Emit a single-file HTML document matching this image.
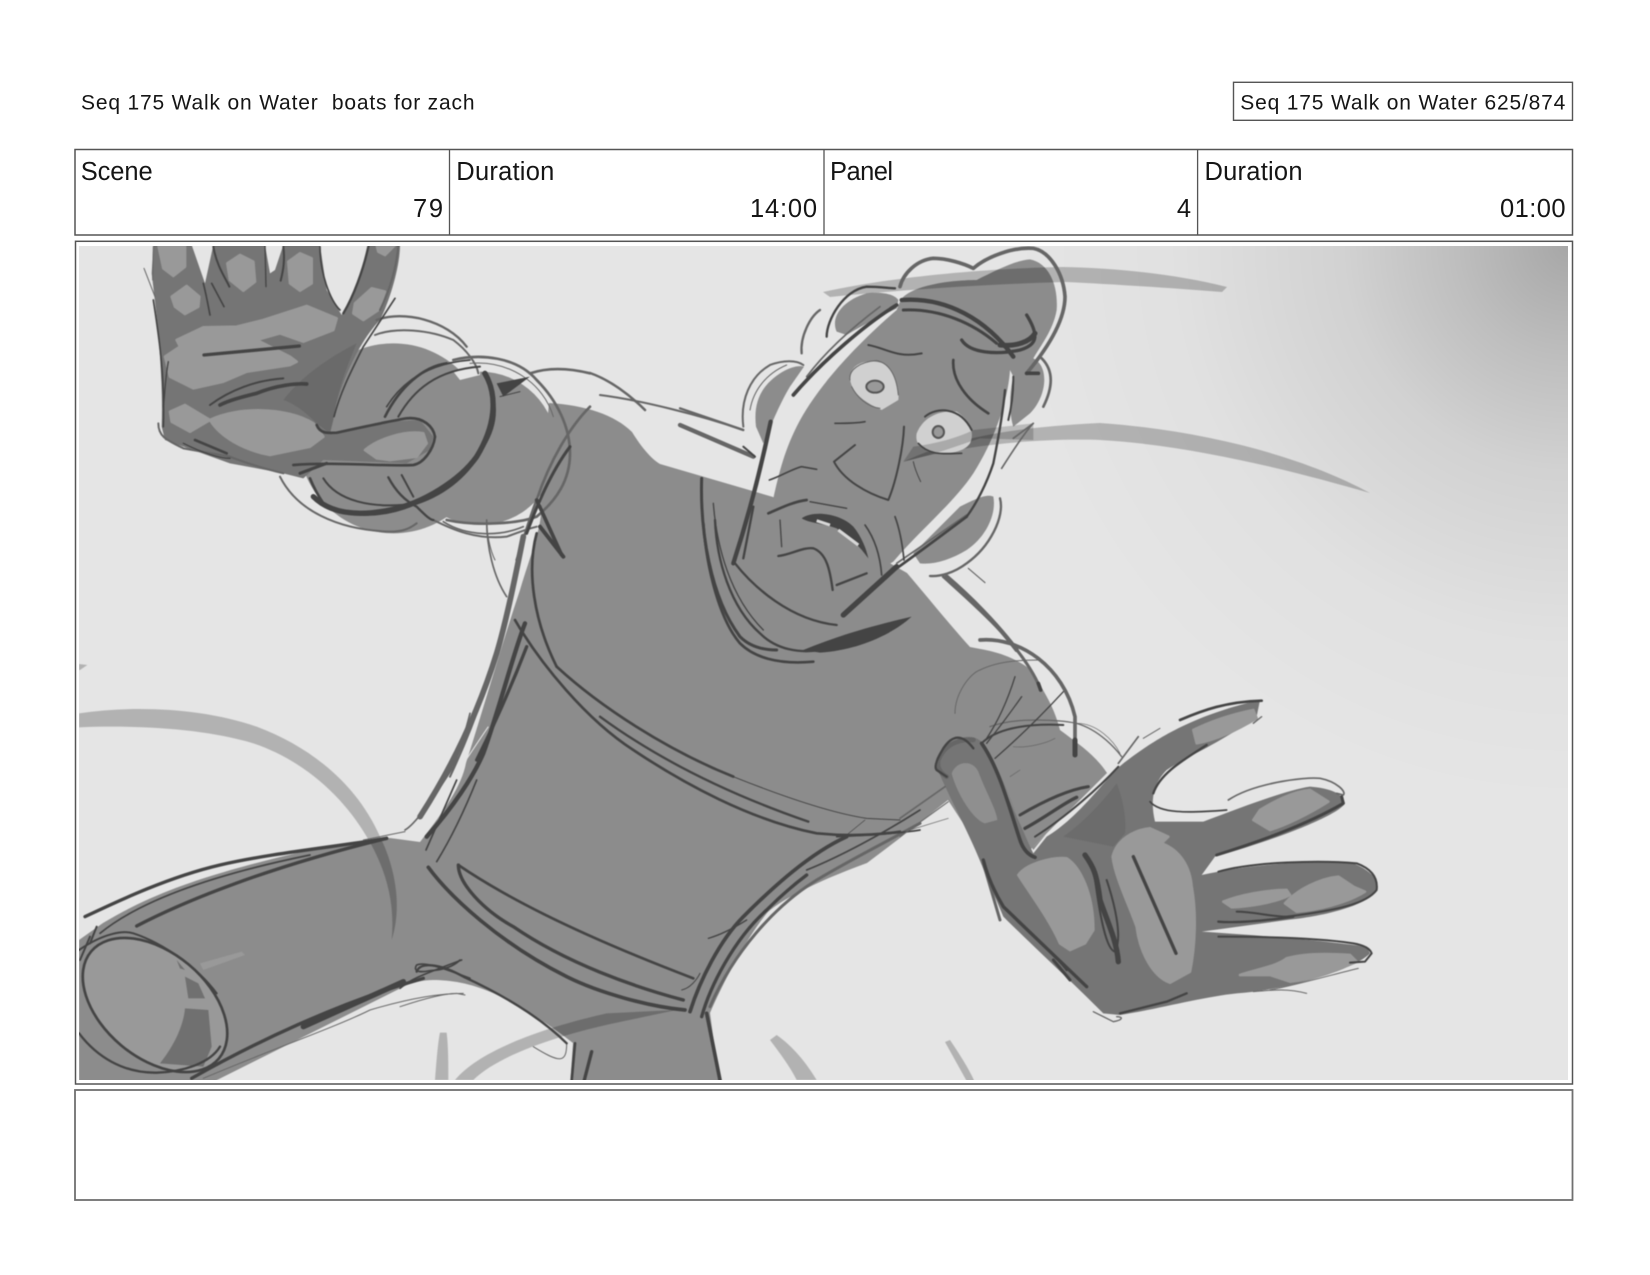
<!DOCTYPE html>
<html><head><meta charset="utf-8"><title>Seq 175 Walk on Water</title>
<style>
html,body{margin:0;padding:0;background:#fff;width:1650px;height:1275px;overflow:hidden}
svg{display:block}
text{font-family:"Liberation Sans",sans-serif;fill:#151515}
.l{fill:none;stroke:#444;stroke-linecap:round;stroke-linejoin:round}
.g{fill:none;stroke:#666;stroke-linecap:round;stroke-linejoin:round}
.s{fill:#000;fill-opacity:.22}
.p{fill:#999;stroke:#999;stroke-width:8;stroke-linejoin:round}
.art{filter:blur(.45px)}
</style></head><body>
<svg width="1650" height="1275" viewBox="0 0 1650 1275" xmlns="http://www.w3.org/2000/svg">
<defs>
<clipPath id="c"><rect x="79" y="246" width="1489" height="834"/></clipPath>
<radialGradient id="r" gradientUnits="userSpaceOnUse" cx="1568" cy="246" r="560">
<stop offset="0" stop-color="#000" stop-opacity=".27"/><stop offset=".2" stop-color="#000" stop-opacity=".17"/><stop offset=".4" stop-color="#000" stop-opacity=".085"/><stop offset=".7" stop-color="#000" stop-opacity=".02"/><stop offset="1" stop-color="#000" stop-opacity="0"/></radialGradient>
</defs>
<rect width="1650" height="1275" fill="#fff"/>
<text x="81" y="109.5" font-size="21" textLength="393.5" lengthAdjust="spacing" xml:space="preserve">Seq 175 Walk on Water  boats for zach</text>
<rect x="1233.5" y="82.3" width="339" height="38" fill="none" stroke="#555" stroke-width="1.4"/>
<text x="1240.3" y="109.5" font-size="21" textLength="325" lengthAdjust="spacing">Seq 175 Walk on Water 625/874</text>
<rect x="75" y="149.5" width="1497.5" height="85.5" fill="none" stroke="#555" stroke-width="1.5"/>
<path d="M449.5 149.5V235M824 149.5V235M1197.6 149.5V235" stroke="#555" stroke-width="1.3"/>
<text x="80.7" y="180" font-size="25.5" textLength="72" lengthAdjust="spacing">Scene</text>
<text x="456.3" y="180" font-size="25.5" textLength="98" lengthAdjust="spacing">Duration</text>
<text x="830" y="180" font-size="25.5" textLength="63" lengthAdjust="spacing">Panel</text>
<text x="1204.5" y="180" font-size="25.5" textLength="98" lengthAdjust="spacing">Duration</text>
<text x="413" y="217" font-size="25.5" textLength="30" lengthAdjust="spacing">79</text>
<text x="750" y="217" font-size="25.5" textLength="67" lengthAdjust="spacing">14:00</text>
<text x="1191" y="217" font-size="25.5" text-anchor="end">4</text>
<text x="1500" y="217" font-size="25.5" textLength="65.5" lengthAdjust="spacing">01:00</text>
<rect x="75.5" y="241.3" width="1497" height="842.7" fill="#fff" stroke="#555" stroke-width="1.5"/>
<rect x="75" y="1090" width="1497.5" height="110" fill="#fff" stroke="#707070" stroke-width="1.8"/>

<g clip-path="url(#c)">
<g class="art">
<rect x="70" y="240" width="1510" height="850" fill="#e5e5e5"/>
<rect x="70" y="240" width="1510" height="850" fill="url(#r)"/>

<!-- body masses -->
<g fill="#8c8c8c">
<path d="M549 403C585 405 615 415 632 432C640 445 650 458 660 464L773 497L893 565L907 573C930 600 950 625 970 647C985 650 1005 652 1027 667C1045 690 1055 710 1060 730C1080 745 1095 755 1107 773L1000 880L948 800L900 838L867 863C820 880 780 900 767 913C745 940 722 985 710 1013L720 1087L570 1087L573 1043C550 1025 520 1005 493 993C470 983 450 980 433 980C425 980 415 982 407 985L203 1087L79 1087L79 940L103 923C150 895 200 875 310 850C340 845 370 840 390 838L420 842C445 810 462 785 466 763C480 720 500 650 520 590C532 550 545 520 540 500Z"/>
<g transform="translate(70 240) scale(.33333)">
<circle cx="970" cy="595" r="285"/><circle cx="1230" cy="625" r="230"/>
<path d="M1150 395L1230 380L1230 405L1170 420Z" fill="#e5e5e5"/>
</g>
<g transform="translate(680 230) scale(.33333)">
<path d="M280 805C295 740 310 670 350 590C400 490 500 370 650 240L660 215C680 170 800 150 890 150C950 120 1010 90 1050 88C1110 100 1135 170 1130 240C1120 300 1080 350 1060 385C1110 410 1100 500 1050 550L1000 590C990 560 985 500 1000 440L990 420C985 500 950 620 880 730C820 820 720 900 640 995L300 1200L100 900Z"/>
<path d="M228 590C220 520 240 470 300 430C330 410 360 405 372 410L330 470C300 520 280 570 250 640Z"/>
<path d="M470 305C450 260 490 210 560 190C600 185 640 190 655 210L650 235C600 260 540 290 500 315Z"/>
<path d="M840 830C880 810 920 790 940 800C950 850 920 920 860 960C810 990 760 1005 720 1000L700 970Z"/>
</g>
</g>

<!-- swooshes -->
<g class="s">
<path d="M823 292C900 275 1000 268 1063 267C1120 268 1180 275 1227 287L1222 292C1170 288 1110 284 1065 282C990 284 900 290 830 297Z"/>
<path d="M903 462C950 440 1000 428 1100 423C1200 430 1300 455 1370 493C1290 470 1190 445 1100 440C1040 438 960 445 903 462Z"/>
<g transform="translate(70 650) scale(.33333)">
<path d="M27 190C200 165 400 175 560 230C720 290 860 400 930 560C970 640 1000 760 965 870C975 760 950 660 890 560C820 440 700 330 550 280C400 235 200 225 27 232Z"/>
<path d="M27 42L52 45L30 60L27 60Z"/>
<path d="M1095 1290C1100 1220 1105 1170 1110 1148L1130 1148C1135 1190 1135 1240 1135 1290Z"/>
</g>
<g transform="translate(400 780) scale(.33333)">
<path d="M165 900C230 820 400 750 620 700L830 690L640 730C500 760 300 820 220 900Z"/>
<path d="M1110 780L1130 765C1180 800 1220 850 1250 900L1190 900C1170 860 1140 820 1110 780Z"/>
</g>
<path d="M945 1042L950 1040C960 1055 970 1070 977 1087L970 1087Z"/>
</g>

<!-- leg end -->
<g transform="translate(70 650) scale(.33333)">
<ellipse cx="255" cy="1065" rx="250" ry="155" transform="rotate(40 255 1065)" fill="#999"/>
<path d="M390 940L515 905L525 915L400 960Z" fill="#999"/>
<path d="M345 980L385 1000L405 1045L355 1045ZM345 1075L415 1080L425 1190L400 1250L270 1240C310 1190 340 1130 345 1075Z" fill="#707070"/>
<path d="M320 930L345 960L330 955Z" fill="#707070"/>
<g class="l">
<ellipse cx="255" cy="1065" rx="250" ry="158" transform="rotate(40 255 1065)" stroke-width="8"/>
<path d="M27 1150C80 1220 160 1270 260 1268C340 1265 420 1240 450 1190" stroke-width="7"/>
<path d="M27 900C100 850 160 840 190 850C280 880 380 950 440 1030" stroke-width="6"/>
<path d="M45 800C150 750 300 680 450 645C600 610 800 590 950 565" stroke-width="10"/>
<path d="M200 828C350 750 600 650 950 565" stroke-width="10"/>
<path d="M90 850C200 760 400 680 720 615" stroke-width="5"/>
<path d="M80 830L60 880M60 860L30 930" stroke-width="6"/>
<path d="M365 1285C550 1180 800 1060 1060 985" stroke-width="10"/>
<path d="M700 1130L1000 995" stroke-width="16"/>
<path d="M1170 930C1150 950 1120 960 1080 962C1040 970 1030 960 1040 945C1060 935 1110 950 1200 985" stroke-width="5"/>
</g>
<path class="g" d="M400 1285C600 1200 800 1130 900 1080C1000 1050 1100 1030 1180 1030" stroke-width="3"/>
<path class="g" d="M1005 545L880 570" stroke-width="3"/>
<path class="g" d="M1005 540C1040 520 1100 430 1150 350C1170 300 1190 230 1200 190" stroke-width="5"/>
</g>

<!-- torso lines -->
<g transform="translate(400 520) scale(.33333)">
<path class="g" d="M370 50C350 150 320 300 290 400C240 560 170 720 60 890" stroke-width="17"/>
<path class="g" d="M320 280C290 420 230 600 150 770" stroke-width="6"/>
<g class="l">
<path d="M420 20L490 110" stroke-width="12"/>
<path d="M410 40C380 150 400 300 470 440" stroke-width="8"/>
<path d="M470 440C600 560 800 690 1000 770" stroke-width="8"/>
<path d="M1000 770C1150 830 1300 880 1400 895L1500 900" stroke-width="3"/>
<path d="M345 300C420 430 560 600 700 690C850 790 1050 900 1250 940C1350 950 1430 945 1500 935" stroke-width="8"/>
<path d="M600 590C750 700 950 810 1225 905" stroke-width="7"/>
<path d="M375 310C340 400 300 560 250 700C220 770 160 860 80 950" stroke-width="13"/>
<path d="M380 380C330 510 280 620 230 720" stroke-width="10"/>
<path d="M910 10C920 150 960 300 1020 370C1060 410 1130 435 1240 425" stroke-width="8"/>
<path d="M945 0C950 120 990 260 1080 340C1130 390 1200 400 1260 390" stroke-width="7"/>
</g>
<path d="M1210 390C1330 340 1450 310 1535 290C1480 340 1380 390 1260 398Z" fill="#444"/>
<path d="M265 620C210 700 160 780 90 880" stroke="#e5e5e5" stroke-width="3" fill="none"/>
<path class="g" d="M260 0C260 80 280 170 320 230M130 5C200 50 300 50 370 20" stroke-width="5"/>
</g>
<g transform="translate(400 780) scale(.33333)">
<path class="g" d="M930 680C1000 520 1120 380 1250 300C1350 240 1450 190 1560 130" stroke-width="9"/>
<path class="g" d="M0 680C60 660 130 640 170 640L195 645" stroke-width="3"/>
<path class="g" d="M500 790C500 850 480 850 400 800" stroke-width="3"/>
<g class="l">
<path d="M175 255C300 340 500 450 880 595" stroke-width="8"/>
<path d="M175 255C175 310 250 390 340 440C500 550 700 620 850 660" stroke-width="10"/>
<path d="M85 262C150 350 300 490 500 590C600 640 750 680 855 690" stroke-width="11"/>
<path d="M845 630C870 625 890 600 900 580" stroke-width="3"/>
<path d="M870 695C900 600 960 480 1030 410C1120 320 1230 220 1340 170" stroke-width="11"/>
<path d="M905 710C930 620 1000 480 1100 390C1150 340 1200 300 1220 285" stroke-width="10"/>
<path d="M925 475C960 465 1000 445 1040 420" stroke-width="4"/>
<path d="M1220 270C1320 230 1450 160 1560 90" stroke-width="5"/>
<path d="M1310 170C1400 165 1500 160 1560 150" stroke-width="5"/>
<path d="M1340 165L1395 120" stroke-width="2"/>
<path d="M230 0C190 100 150 180 110 245M170 0C130 90 100 160 78 210" stroke-width="5"/>
<path d="M920 700L960 900" stroke-width="11"/>
<path d="M525 790L515 900" stroke-width="8"/>
<path d="M575 815L553 900" stroke-width="10"/>
<path d="M50 575C60 545 120 550 190 590C300 640 420 710 500 790" stroke-width="7"/>
<path d="M0 625C30 600 50 590 185 540" stroke-width="5"/>
</g>
</g>

<!-- face -->
<g transform="translate(680 230) scale(.33333)">
<path d="M510 440C515 400 560 385 610 400C640 420 660 470 655 510L605 540C560 520 510 490 510 440Z" fill="#d0d0d0"/>
<path d="M710 610C730 560 780 540 830 545C870 570 885 610 870 640C850 670 790 675 745 665C720 650 705 640 710 610Z" fill="#d0d0d0"/>
<path d="M700 650C770 640 830 625 880 600L1060 580L1060 630L900 625C850 640 780 670 670 695Z" fill="#000" fill-opacity=".18"/>
<ellipse cx="585" cy="470" rx="26" ry="18" fill="#999" stroke="#555" stroke-width="6"/>
<ellipse cx="775" cy="606" rx="17" ry="18" fill="#999" stroke="#555" stroke-width="6"/>
<path d="M365 865C400 840 480 850 520 890C545 920 560 960 565 985C540 950 510 920 470 895C430 880 390 880 365 865Z" fill="#444"/>
<path d="M410 872L450 885M475 900L535 945" stroke="#d8d8d8" stroke-width="9" fill="none"/>
<g class="g">
<path d="M660 170C670 130 710 90 760 85C800 85 850 100 880 115C920 80 1000 50 1060 55C1110 65 1150 130 1155 200C1155 280 1090 370 1040 430" stroke-width="11"/>
<path d="M1085 385C1120 420 1120 470 1090 530" stroke-width="8"/>
<path d="M365 370C360 320 390 260 420 240" stroke-width="7"/>
<path d="M190 590C180 510 210 440 270 405C310 390 350 390 370 405" stroke-width="6"/>
<path d="M210 540C220 480 260 430 320 405" stroke-width="3"/>
<path d="M190 600L0 535" stroke-width="7"/>
<path d="M220 680L0 585" stroke-width="13"/>
<path d="M960 805C975 860 930 950 860 1000C820 1030 780 1040 750 1038" stroke-width="7"/>
<path d="M800 1040C870 1100 950 1180 1010 1260" stroke-width="13"/>
<path d="M865 1015L915 1058" stroke-width="3"/>
<path d="M860 855L650 1000" stroke-width="5"/>
<path d="M510 450C505 420 540 395 590 392C630 400 650 440 655 495" stroke-width="3"/>
<path d="M515 470C530 500 560 530 600 535" stroke-width="3"/>
<path d="M1060 580C1040 600 1000 660 965 715M1060 580L1000 625" stroke-width="5"/>
<path d="M600 230C520 290 440 360 380 440" stroke-width="5"/>
</g>
<g class="l">
<path d="M565 345C620 355 650 385 725 370" stroke-width="6"/>
<path d="M820 390C815 450 860 510 925 550" stroke-width="8"/>
<path d="M735 560C770 530 840 530 875 600" stroke-width="6"/>
<path d="M715 640C750 680 800 670 845 670" stroke-width="5"/>
<path d="M465 580C500 580 530 580 555 575" stroke-width="5"/>
<path d="M525 645L462 695C490 750 560 790 625 810C650 750 670 650 672 590" stroke-width="6"/>
<path d="M268 750C300 740 340 715 365 710L410 718" stroke-width="5"/>
<path d="M700 695C705 720 715 740 722 755" stroke-width="3"/>
<path d="M265 850C300 835 340 815 380 810" stroke-width="8"/>
<path d="M390 815L500 835" stroke-width="4"/>
<path d="M300 870L305 950" stroke-width="4"/>
<path d="M295 978C330 975 370 950 400 955C440 970 450 1020 458 1080" stroke-width="7"/>
<path d="M470 1065L560 1030" stroke-width="7"/>
<path d="M555 885C580 920 600 970 605 1035" stroke-width="5"/>
<path d="M645 860C660 900 668 950 672 990" stroke-width="5"/>
<path d="M165 1000C220 1070 330 1170 470 1185" stroke-width="7"/>
<path d="M272 575C250 680 215 830 160 1000" stroke-width="13"/>
<path d="M190 985L220 830" stroke-width="7"/>
<path d="M65 745C60 900 90 1100 180 1220C210 1250 250 1260 290 1260" stroke-width="9"/>
<path d="M100 820C110 950 150 1100 250 1200" stroke-width="4"/>
<path d="M665 210C800 200 920 270 1000 380" stroke-width="13"/>
<path d="M670 240C780 235 880 280 950 340" stroke-width="9"/>
<path d="M845 330C870 370 950 375 1020 360C1070 345 1080 320 1040 255" stroke-width="10"/>
<path d="M960 345C1010 350 1050 335 1065 310" stroke-width="15"/>
<path d="M1040 430L1075 430" stroke-width="11"/>
<path d="M975 480C970 540 960 600 940 700C920 760 890 820 860 860" stroke-width="7"/>
<path d="M1000 440C1000 500 990 550 985 570" stroke-width="6"/>
<path d="M860 860C780 920 720 965 650 1015" stroke-width="8"/>
<path d="M650 1010L490 1155" stroke-width="16"/>
<path d="M650 225C560 280 430 390 340 495" stroke-width="11"/>
<path d="M440 320C440 270 490 180 560 170C600 170 630 175 645 175" stroke-width="7"/>
<path d="M190 650L225 680" stroke-width="6"/>
</g>
</g>

<!-- left hand -->
<g transform="translate(70 240) scale(.33333)">
<path fill="#757575" d="M250 15L245 100C260 220 280 400 275 560L285 600L480 670L640 700L700 715L760 660L1010 670L1080 630L1090 590L1050 540L960 545L780 580L790 530C810 430 870 300 930 240C960 180 990 80 990 15L895 15C880 90 850 160 815 225L770 150L750 15L640 15L615 90L600 100L585 15L430 15L405 130L365 15Z"/>
<path fill="#6a6a6a" d="M640 480C700 400 800 340 860 310C830 380 800 460 790 540L780 580L740 550C700 510 670 490 640 480Z"/>
<g class="p">
<path d="M265 15L345 15L345 80L310 108L280 85Z"/>
<path d="M305 170L350 138L388 170L385 200L345 222L315 200Z"/>
<path d="M472 70L510 45L550 65L555 125L520 152L480 120Z"/>
<path d="M655 65L690 40L725 55L725 130L690 152L660 130Z"/>
<path d="M920 15L975 15L945 45L925 35Z"/>
<path d="M855 190L905 145L945 155L925 210L880 240L850 220Z"/>
<path d="M320 300L400 262L500 260L580 240L710 198L800 235L790 270L700 305L630 280L560 300L660 350L680 365L660 375L530 395L460 425L370 445L300 410L285 350L330 320Z"/>
<path d="M420 540C500 500 650 500 730 550L760 590L720 620L600 645C520 630 450 590 420 540Z"/>
<path d="M300 515L345 495L420 540L360 575L305 545Z"/>
<path d="M885 630C920 600 1000 570 1060 580L1070 610L1040 650L960 660L920 655Z"/>
</g>
<g class="g">
<path d="M250 20L248 120M222 85L255 170" stroke-width="3"/>
<path d="M985 15C980 80 960 150 930 210" stroke-width="6"/>
<path d="M915 285C980 260 1080 270 1150 300C1190 330 1220 370 1225 400" stroke-width="6"/>
<path d="M920 240C1000 210 1130 240 1190 320" stroke-width="7"/>
<path d="M265 550C265 590 290 600 340 625L480 650C530 670 600 690 640 700" stroke-width="6"/>
<path d="M630 710C680 810 800 870 960 875C1000 875 1020 865 1040 850" stroke-width="6"/>
<path d="M1090 840C1150 870 1220 900 1310 890C1340 880 1360 870 1400 860" stroke-width="6"/>
<path d="M1560 500C1500 560 1440 660 1400 780C1380 830 1360 900 1340 960" stroke-width="8"/>
<path d="M1250 840C1250 880 1260 930 1275 960" stroke-width="3"/>
<path d="M1150 360C1230 340 1340 350 1400 420C1460 480 1500 560 1500 640C1500 720 1460 780 1400 830C1350 850 1220 860 1130 840" stroke-width="8"/>
<path d="M1200 370C1320 360 1420 430 1450 530" stroke-width="3"/>
<path d="M1380 400C1440 380 1500 385 1560 400" stroke-width="8"/>
</g>
<g class="l">
<path d="M250 180C265 280 285 400 280 560" stroke-width="5"/>
<path d="M295 365C285 420 285 460 280 500" stroke-width="4"/>
<path d="M430 20C440 80 470 120 478 140" stroke-width="6"/>
<path d="M400 130C410 170 415 200 420 225M425 130L462 200" stroke-width="5"/>
<path d="M585 15L588 140" stroke-width="4"/>
<path d="M640 20C645 60 640 90 632 122" stroke-width="6"/>
<path d="M750 20C750 100 780 180 810 210" stroke-width="5"/>
<path d="M895 20C880 90 850 170 820 220" stroke-width="7"/>
<path d="M975 175L880 320C840 400 810 460 792 530" stroke-width="5"/>
<path d="M402 345L688 318" stroke-width="10"/>
<path d="M420 495C480 450 560 420 640 415" stroke-width="6"/>
<path d="M450 495C480 480 520 470 560 460C620 435 680 430 710 432" stroke-width="11"/>
<path d="M740 555C750 580 770 580 800 578C860 565 950 545 1010 535C1060 530 1090 560 1095 590C1090 630 1060 670 1030 675C950 680 800 665 670 675" stroke-width="8"/>
<path d="M690 700L770 670" stroke-width="9"/>
<path d="M375 600L470 640" stroke-width="8"/>
<path d="M340 610C400 640 450 655 480 655" stroke-width="4"/>
<path d="M945 530C990 440 1060 380 1130 370" stroke-width="8"/>
<path d="M985 530C1030 450 1100 390 1230 380" stroke-width="6"/>
<path d="M950 500C1000 420 1080 370 1200 360" stroke-width="5"/>
<path d="M1240 400C1280 470 1290 540 1240 620C1200 700 1130 760 1040 790C950 830 830 840 760 790C740 760 730 740 720 715" stroke-width="8"/>
<path d="M1245 400C1285 470 1275 560 1220 650C1170 720 1060 790 960 810C860 830 780 820 730 770" stroke-width="16"/>
<path d="M760 715C800 780 900 810 1040 790" stroke-width="6"/>
<path d="M955 712C975 750 1000 780 1040 800C1060 820 1080 840 1090 840" stroke-width="7"/>
<path d="M995 705L1030 770" stroke-width="6"/>
<path d="M1500 620C1440 700 1400 800 1370 880" stroke-width="9"/>
<path d="M1400 780L1475 945" stroke-width="11"/>
<path d="M1290 470L1350 455" stroke-width="3"/>
</g>
<path d="M1280 430L1380 410L1300 470Z" fill="#444"/>
</g>
<path class="g" d="M590 373C610 380 630 395 645 410" stroke-width="2.5"/>
<path class="g" d="M600 395C640 400 700 415 743 430" stroke-width="2"/>

<!-- right hand -->
<g transform="translate(920 660) scale(.33333)">
<path fill="#757575" d="M50 320C90 230 150 210 190 250C250 340 290 480 340 580L380 530C480 470 560 350 610 310C690 250 800 170 1020 120L1010 170C900 250 800 290 740 330C700 370 690 420 705 485L850 485C970 440 1100 390 1170 380C1230 385 1270 400 1275 430C1260 460 1100 530 885 590L845 645C1000 610 1200 600 1300 610C1350 630 1380 660 1370 690C1340 740 1200 770 1100 780L845 815C1000 825 1200 840 1340 860L1350 880C1300 930 1100 990 950 1000C850 1010 700 1050 600 1065L550 1060C450 960 330 850 250 770L195 640C150 520 80 400 50 320Z"/>
<path fill="#8c8c8c" d="M220 300C250 360 290 480 340 560L380 520L340 570C300 500 250 380 220 300Z"/>
<path fill="#6c6c6c" d="M590 370C610 420 620 480 615 520L580 560L430 530C500 480 560 410 590 370Z"/>
<path fill="#8f8f8f" d="M95 340C110 300 160 300 175 335C195 390 230 450 232 480L195 490C160 480 110 400 95 340Z"/>
<g class="p">
<path d="M295 645C320 610 400 590 440 595C480 620 520 700 520 810L495 850L450 870L420 850C390 780 330 700 295 645Z"/>
<path d="M578 590C590 540 640 510 690 505L745 530L725 550C780 570 810 620 815 680C830 760 825 860 810 935L750 968C700 950 660 880 650 800C625 730 585 650 578 590Z"/>
<path d="M820 210C880 180 950 160 1000 150L1010 175C950 210 890 240 830 250Z"/>
<path d="M1000 480L1020 450C1070 420 1120 395 1170 390L1225 425C1170 460 1100 495 1050 510Z"/>
<path d="M910 725C960 705 1040 690 1100 690L1110 705C1060 730 980 740 935 742Z"/>
<path d="M1095 730C1130 690 1200 655 1255 650L1300 680L1335 695C1280 730 1190 750 1130 755Z"/>
<path d="M960 945C1000 930 1070 920 1100 895C1150 880 1220 880 1290 885L1310 905C1250 930 1180 960 1110 965L1050 945Z"/>
</g>
<g class="g">
<path d="M80 350C60 340 50 320 55 300C70 260 110 235 160 240" stroke-width="14"/>
<path d="M190 610L240 780" stroke-width="9"/>
<path d="M1050 990C1150 970 1250 940 1315 925" stroke-width="3"/>
<path d="M1000 995C1060 990 1100 985 1160 1000" stroke-width="3"/>
<path d="M925 420C1000 370 1150 350 1200 355C1250 365 1280 395 1270 405L1250 400" stroke-width="5"/>
<path d="M670 235L720 205" stroke-width="3"/>
<path d="M1000 190L1025 170" stroke-width="4"/>
<path d="M520 1055L580 1085C610 1080 610 1070 590 1070" stroke-width="4"/>
</g>
<g class="l">
<path d="M160 265C130 225 100 220 70 265C55 290 40 320 50 330L80 350" stroke-width="7"/>
<path d="M185 250C240 330 270 450 300 540C310 570 325 585 345 592" stroke-width="11"/>
<path d="M780 180C850 150 920 125 1025 122" stroke-width="8"/>
<path d="M700 400C720 340 790 300 860 255" stroke-width="7"/>
<path d="M690 425C720 460 800 460 920 450" stroke-width="5"/>
<path d="M890 585C1000 550 1150 500 1270 430L1265 410" stroke-width="9"/>
<path d="M895 635C1000 605 1200 600 1310 610C1350 625 1375 650 1370 690C1340 730 1260 750 1100 770C1050 770 1000 755 950 755" stroke-width="6"/>
<path d="M895 785C960 790 1050 780 1120 770" stroke-width="7"/>
<path d="M895 830C1050 830 1200 835 1300 850C1330 855 1350 865 1355 880L1335 905L1290 908" stroke-width="6"/>
<path d="M800 1000L740 1025L600 1060" stroke-width="7"/>
<path d="M500 980L250 740C220 690 200 640 190 600" stroke-width="10"/>
<path d="M280 770C350 840 420 900 440 930" stroke-width="7"/>
<path d="M400 900L450 960" stroke-width="9"/>
<path d="M495 585C520 620 530 640 540 720C560 780 590 840 595 905" stroke-width="16"/>
<path d="M560 660C580 720 610 830 585 875C560 870 540 780 520 620" stroke-width="6"/>
<path d="M640 590L768 880" stroke-width="10"/>
</g>
</g>
<g transform="translate(900 560) scale(.33333)">
<g class="g">
<path d="M130 50C230 140 370 260 422 388" stroke-width="9"/>
<path d="M240 240C360 230 490 320 525 470L525 585" stroke-width="11"/>
<path d="M165 460C165 400 210 340 240 330C300 300 380 300 420 300" stroke-width="3"/>
<path d="M270 500C350 470 480 480 530 490C600 510 650 570 665 590" stroke-width="4"/>
<path d="M530 490C590 490 640 540 660 580" stroke-width="2"/>
<path d="M340 560C380 565 440 550 465 535" stroke-width="2"/>
<path d="M655 610L715 530" stroke-width="5"/>
<path d="M330 650L360 630" stroke-width="2"/>
<path d="M0 775L135 680" stroke-width="5"/>
<path d="M0 830L145 725" stroke-width="3"/>
<path d="M30 810L145 775" stroke-width="2"/>
<path d="M205 25L255 68" stroke-width="3"/>
</g>
<g class="l">
<path d="M415 370L422 390" stroke-width="11"/>
<path d="M525 540L525 585" stroke-width="15"/>
<path d="M345 350C320 430 290 490 260 535" stroke-width="4"/>
<path d="M365 410C330 460 300 500 260 550" stroke-width="4"/>
<path d="M490 395C430 460 360 530 285 595" stroke-width="4"/>
<path d="M250 545C300 500 400 490 490 495" stroke-width="6"/>
<path d="M360 765C420 730 500 690 565 680" stroke-width="9"/>
<path d="M375 805C440 770 490 730 530 712" stroke-width="10"/>
<path d="M405 830C500 770 600 680 655 620" stroke-width="6"/>
</g>
</g>
</g>
</g>
</svg>
</body></html>
